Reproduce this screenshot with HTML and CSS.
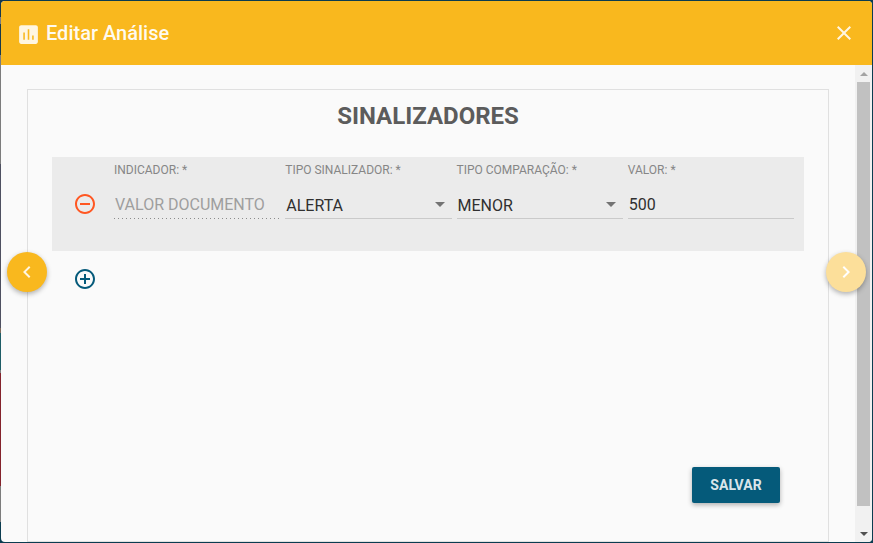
FILE: index.html
```html
<!DOCTYPE html>
<html lang="pt-BR">
<head>
    <meta charset="utf-8">
    <title>Editar Análise</title>
    <link rel="stylesheet" href="styles.css">
</head>
<body>
    <div class="dialog" role="dialog" aria-labelledby="dialog-title">
        <header class="toolbar">
            <svg class="toolbar-icon" viewBox="0 0 24 24" aria-hidden="true">
                <path d="M19 3H5c-1.1 0-2 .9-2 2v14c0 1.1.9 2 2 2h14c1.1 0 2-.9 2-2V5c0-1.1-.9-2-2-2zM8.500 17H7v-7h1.500v7zm4.250 0h-1.500V7h1.500v10zm4.250 0h-1.500v-4h1.500v4z"/>
            </svg>
            <h1 id="dialog-title">Editar Análise</h1>
            <button type="button" class="icon-button close" aria-label="Fechar">
                <svg viewBox="0 0 24 24"><path d="M19 6.41L17.59 5 12 10.59 6.41 5 5 6.41 10.59 12 5 17.59 6.41 19 12 13.41 17.59 19 19 17.59 13.41 12z"/></svg>
            </button>
        </header>

        <div class="body">
            <form class="panel">
                <h2>SINALIZADORES</h2>
                <div class="row">
                    <button type="button" class="icon-button remove" aria-label="Remover">
                        <svg viewBox="0 0 24 24"><path d="M7 11v2h10v-2H7zm5-9C6.48 2 2 6.48 2 12s4.48 10 10 10 10-4.48 10-10S17.52 2 12 2zm0 18c-4.41 0-8-3.59-8-8s3.59-8 8-8 8 3.59 8 8-3.59 8-8 8z"/></svg>
                    </button>
                    <div class="field">
                        <label for="indicador">INDICADOR: *</label>
                        <input type="text" id="indicador" value="VALOR DOCUMENTO" disabled>
                    </div>
                    <div class="field">
                        <label for="tipo">TIPO SINALIZADOR: *</label>
                        <div class="select">
                            <select id="tipo">
                                <option>ALERTA</option>
                            </select>
                        </div>
                    </div>
                    <div class="field">
                        <label for="comparacao">TIPO COMPARAÇÃO: *</label>
                        <div class="select">
                            <select id="comparacao">
                                <option>MENOR</option>
                            </select>
                        </div>
                    </div>
                    <div class="field">
                        <label for="valor">VALOR: *</label>
                        <input type="text" id="valor" value="500">
                    </div>
                </div>
                <button type="button" class="icon-button add" aria-label="Adicionar">
                    <svg viewBox="0 0 24 24"><path d="M13 7h-2v4H7v2h4v4h2v-4h4v-2h-4V7zm-1-5C6.48 2 2 6.48 2 12s4.48 10 10 10 10-4.48 10-10S17.52 2 12 2zm0 18c-4.41 0-8-3.59-8-8s3.59-8 8-8 8 3.59 8 8-3.59 8-8 8z"/></svg>
                </button>
                <button type="submit" class="save">SALVAR</button>
            </form>
            <div class="scrollbar" aria-hidden="true">
                <span class="arrow up"></span>
                <span class="thumb"></span>
                <span class="arrow down"></span>
            </div>
        </div>

        <button type="button" class="fab prev" aria-label="Anterior">
            <svg viewBox="0 0 24 24"><path d="M15.41 7.41L14 6l-6 6 6 6 1.41-1.41L10.83 12z"/></svg>
        </button>
        <button type="button" class="fab next" aria-label="Próximo" disabled>
            <svg viewBox="0 0 24 24"><path d="M10 6L8.59 7.41 13.17 12l-4.58 4.59L10 18l6-6z"/></svg>
        </button>
    </div>
</body>
</html>
```
FILE: styles.css
```css
* {
    box-sizing: border-box;
}
body {
    margin: 0;
    padding: 1px;
    height: 100vh;
    font-family: Roboto, Arial, sans-serif;
    /* the page behind the dialog, only its edge can be seen */
    background: linear-gradient(#17384a 17px, #7c7c7c 17px 24px, #17384a 24px 55px, #7c7c7c 55px 164px, #4e5060 164px 328px, #7d6a5c 328px 333px, #1d5c66 333px 370px, #7c7c7c 370px 373px, #84232c 373px 486px, #7c7c7c 486px 522px, #0b3c50 522px) left / 10px 100% no-repeat #0b3c50;
}
button, input, select {
    font-family: inherit;
}
button {
    padding: 0;
    border: none;
    cursor: pointer;
}
svg {
    display: block;
    fill: currentColor;
}
.dialog {
    position: relative;
    display: flex;
    flex-direction: column;
    height: 100%;
    background-color: #fafafa;
    border-radius: 4px;
    overflow: hidden;
}
.toolbar {
    display: flex;
    align-items: center;
    height: 64px;
    flex: none;
    padding: 0 16px 0 15px;
    background-color: #f9b81e;
    color: rgba(255, 255, 255, 0.87);
}
.toolbar h1 {
    flex: 1;
    margin: 0 0 0 5px;
    font-size: 20px;
    font-weight: 500;
    line-height: 24px;
    color: rgba(255, 255, 255, 0.95);
}
.toolbar-icon {
    width: 25px;
    height: 25px;
    margin-top: 3px;
}
.icon-button {
    width: 24px;
    height: 24px;
    background: none;
    color: inherit;
}
.body {
    display: flex;
    flex: 1;
    min-height: 0;
}
.panel {
    display: flex;
    flex-direction: column;
    flex: 1;
    margin: 24px 26px 0;
    padding: 0 24px 38px;
    border: 1px solid #e0e0e0;
}
.panel h2 {
    margin: 10px 0 25px;
    font-size: 24px;
    font-weight: 700;
    line-height: 32px;
    text-align: center;
    color: #5c5c5c;
}
.row {
    display: grid;
    grid-template-columns: 57px repeat(4, 1fr);
    column-gap: 5px;
    height: 94px;
    padding: 4px 10px 0 0;
    background-color: #ebebeb;
}
.remove {
    margin: 31px 0 0 21px;
    color: #ff5722;
}
.field label {
    display: block;
    margin-bottom: 10px;
    font-size: 12px;
    line-height: 18px;
    color: #868686;
}
.field input,
.field select {
    display: block;
    width: 100%;
    height: 30px;
    padding: 2px 1px 1px;
    border: none;
    border-bottom: 1px solid #cacaca;
    border-radius: 0;
    outline: none;
    background: none;
    font-size: 16px;
    color: #303030;
    appearance: none;
}
.field select {
    padding-top: 4px;
}
.field input:disabled {
    border-bottom: none;
    padding-bottom: 2px;
    background: repeating-linear-gradient(to right, #8c8c8c 0 1px, transparent 1px 4px) bottom / 100% 1px no-repeat;
    color: #9e9e9e;
}
.select {
    position: relative;
}
.select::after {
    content: "";
    position: absolute;
    right: 7px;
    top: 13px;
    border: 5px solid transparent;
    border-top-color: #737373;
    border-bottom: none;
    pointer-events: none;
}
.add {
    margin: 16px 0 0 21px;
    color: #055a7a;
}
.save {
    align-self: flex-end;
    width: 88px;
    height: 36px;
    margin: auto 24px 0 0;
    border-radius: 2px;
    background-color: #055a7a;
    box-shadow: 0 2px 5px rgba(0, 0, 0, 0.3);
    font-size: 14px;
    font-weight: 700;
    color: rgba(255, 255, 255, 0.87);
}
.scrollbar {
    display: flex;
    flex-direction: column;
    align-items: center;
    width: 17px;
    background-color: #f1f1f1;
}
.thumb {
    flex: 1;
    width: 13px;
    margin: 6px 0 26px;
    background-color: #c1c1c1;
}
.arrow {
    border: 4px solid transparent;
}
.up {
    margin-top: 7px;
    border-top: none;
    border-bottom-color: #a3a3a3;
}
.down {
    margin-bottom: 6px;
    border-bottom: none;
    border-top-color: #505050;
}
/* previous / next buttons float over the edges of the dialog */
.fab {
    position: absolute;
    top: 50%;
    width: 40px;
    height: 40px;
    margin-top: -20px;
    border-radius: 50%;
    background-color: #f9b81e;
    box-shadow: 0 2px 5px rgba(0, 0, 0, 0.3);
    color: rgba(255, 255, 255, 0.87);
}
.fab svg {
    width: 24px;
    height: 24px;
    margin: 0 auto;
}
.prev {
    left: 6px;
}
.next {
    right: 6px;
    background-color: #fcdf9a;
    color: #fff;
}
```
